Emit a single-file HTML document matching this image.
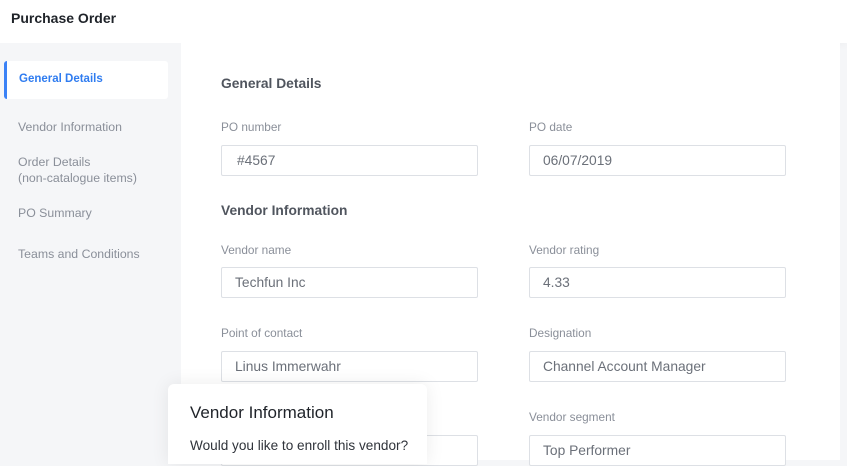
<!DOCTYPE html>
<html><head><style>
*{margin:0;padding:0;box-sizing:border-box}
body{width:847px;height:460px;overflow:hidden;background:#f5f6f8;font-family:"Liberation Sans",sans-serif;position:relative}
.hdr{position:absolute;left:0;top:0;width:847px;height:43px;background:#fff;box-shadow:0 2px 8px rgba(0,0,0,.03)}
.hdr span{position:absolute;left:11px;top:10px;font-size:14px;font-weight:bold;color:#1f2329}
.side{position:absolute;left:0;top:43px;width:181px;height:417px;background:#f5f6f8}
.nav{position:absolute;left:18px;font-size:12.3px;color:#8a8f99;line-height:16px}
.act{position:absolute;left:4px;top:61px;width:164px;height:38px;background:#fff;border-radius:3px;border-left:3px solid #3b82f6}
.act span{position:absolute;left:12px;top:12px;font-size:11.5px;color:#2f7cf0;font-weight:bold}
.main{position:absolute;left:181px;top:43px;width:659px;height:417px;background:#fff}
.h{position:absolute;font-size:13.8px;font-weight:bold;color:#50555e}
.l{position:absolute;font-size:11.8px;color:#8a8f99}
.i{position:absolute;width:257px;height:31px;border:1px solid #dde0e5;border-radius:2px;font-size:13.8px;color:#6b7079;padding:7px 0 0 13px;background:#fff}
.pop{position:absolute;left:168px;top:384px;width:259px;height:80px;background:#fff;border-radius:6px 6px 0 0;box-shadow:0 0 18px rgba(0,0,0,.08)}
</style></head><body>
<div class="hdr"><span>Purchase Order</span></div>
<div class="side"></div>
<div class="act"><span>General Details</span></div>
<div class="nav" style="top:119px">Vendor Information</div>
<div class="nav" style="top:154px">Order Details<br>(non-catalogue items)</div>
<div class="nav" style="top:205px">PO Summary</div>
<div class="nav" style="top:246px">Teams and Conditions</div>
<div class="main"></div>
<div class="h" style="left:221px;top:76px">General Details</div>
<div class="l" style="left:221px;top:120px">PO number</div>
<div class="l" style="left:529px;top:120px">PO date</div>
<div class="i" style="left:221px;top:145px;padding-left:15px">#4567</div>
<div class="i" style="left:529px;top:145px">06/07/2019</div>
<div class="h" style="left:221px;top:203px">Vendor Information</div>
<div class="l" style="left:221px;top:243px">Vendor name</div>
<div class="l" style="left:529px;top:243px">Vendor rating</div>
<div class="i" style="left:221px;top:267px">Techfun Inc</div>
<div class="i" style="left:529px;top:267px">4.33</div>
<div class="l" style="left:221px;top:326px">Point of contact</div>
<div class="l" style="left:529px;top:326px">Designation</div>
<div class="i" style="left:221px;top:351px">Linus Immerwahr</div>
<div class="i" style="left:529px;top:351px">Channel Account Manager</div>
<div class="l" style="left:529px;top:410px">Vendor segment</div>
<div class="i" style="left:221px;top:435px"></div>
<div class="i" style="left:529px;top:435px">Top Performer</div>
<div class="pop">
<div style="position:absolute;left:22px;top:19px;font-size:17px;color:#1f2329">Vendor Information</div>
<div style="position:absolute;left:22px;top:54px;font-size:13.6px;color:#2f333a">Would you like to enroll this vendor?</div>
</div>
</body></html>
